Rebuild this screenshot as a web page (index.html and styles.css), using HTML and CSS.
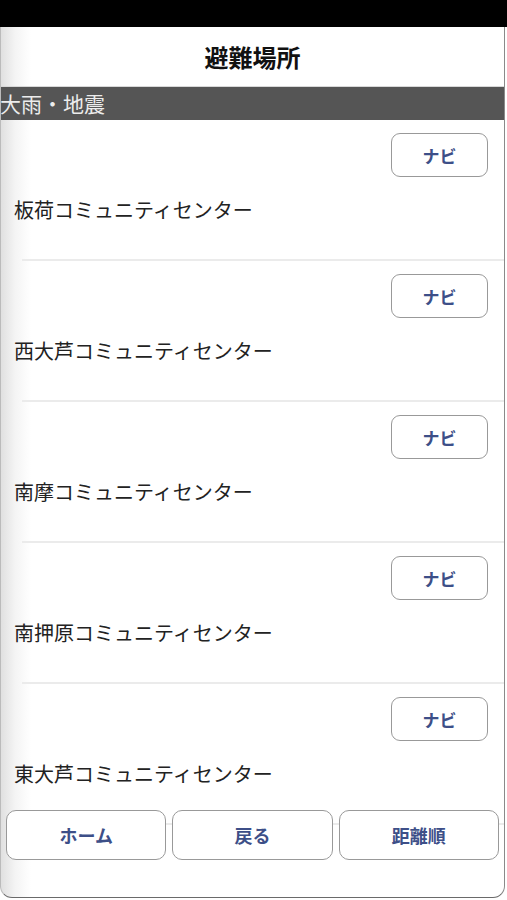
FILE: index.html
```html
<!DOCTYPE html>
<html lang="ja">
<head>
  <meta charset="UTF-8">
  <meta name="viewport" content="width=device-width, initial-scale=1.0">
  <title>避難場所</title>
  <link rel="stylesheet" href="styles.css">
</head>
<body>
  <!-- ステータスバー -->
  <div class="status-bar"></div>

  <div class="card">
    <!-- タイトル -->
    <header class="title-bar">
      <h1>避難場所</h1>
    </header>

    <!-- 種別 -->
    <div class="category">大雨・地震</div>

    <!-- 避難場所の一覧 -->
    <ul class="spots">
      <li class="spot">
        <button class="nav-button">ナビ</button>
        <div class="spot-name">板荷コミュニティセンター</div>
      </li>
      <li class="spot">
        <button class="nav-button">ナビ</button>
        <div class="spot-name">西大芦コミュニティセンター</div>
      </li>
      <li class="spot">
        <button class="nav-button">ナビ</button>
        <div class="spot-name">南摩コミュニティセンター</div>
      </li>
      <li class="spot">
        <button class="nav-button">ナビ</button>
        <div class="spot-name">南押原コミュニティセンター</div>
      </li>
      <li class="spot">
        <button class="nav-button">ナビ</button>
        <div class="spot-name">東大芦コミュニティセンター</div>
      </li>
    </ul>

    <!-- 下のボタン -->
    <footer class="toolbar">
      <button class="tool-button">ホーム</button>
      <button class="tool-button">戻る</button>
      <button class="tool-button">距離順</button>
    </footer>
  </div>
</body>
</html>
```

FILE: styles.css
```css
body {
  margin: 0;
  width: 507px;
  height: 900px;
  background-color: #fff;
  font-family: "Noto Sans CJK JP", "Noto Sans", sans-serif;
  overflow: hidden;
}
/* 一番上の黒いバー */
.status-bar {
  height: 27px;
  background-color: #000;
}
/* 白いカード全体 */
.card {
  position: relative;
  width: 505px;
  height: 871px;
  overflow: hidden;
  border-right: 1px solid #8a8a8a;
  border-bottom: 1px solid #6a6a6a;
  border-left: 1px solid #bbb;
  border-radius: 0 0 12px 12px;
  box-sizing: border-box;
  background: linear-gradient(to right, #e0e0e0 0, #f4f4f4 14px, #fff 30px);
}
.title-bar {
  height: 59px;
  display: flex;
  align-items: center;
  justify-content: center;
  border-bottom: 1px solid #d8d8d8;
}
h1 {
  margin: 0;
  font-size: 24px;
  font-weight: bold;
  color: #111;
}
/* グレーの帯 */
.category {
  height: 33px;
  line-height: 33px;
  margin-left: -1px;
  background-color: #555;
  color: #ececec;
  font-size: 21px;
}
.spots {
  list-style: none;
  margin: 0;
  padding: 0;
}
.spot {
  height: 141px;
  margin-left: 21px;
  padding: 13px 16px 0 0;
  box-sizing: border-box;
  border-bottom: 2px solid #ebebeb;
  display: flex;
  flex-direction: column;
  align-items: flex-end;
}
.nav-button {
  width: 97px;
  height: 44px;
  border: 1.5px solid #999;
  border-radius: 9px;
  background-color: #fff;
  color: #3d4f88;
  font-family: inherit;
  font-size: 17px;
  font-weight: bold;
}
.spot-name {
  align-self: flex-start;
  margin: 18px 0 0 -8px;
  font-size: 20px;
  line-height: 30px;
  color: #222;
}
/* 下のツールバー（リストの上に重なる） */
.toolbar {
  position: absolute;
  left: 5px;
  right: 5px;
  top: 783px;
  display: flex;
  gap: 6px;
}
.tool-button {
  flex: 1;
  height: 50px;
  border: 1.5px solid #999;
  border-radius: 10px;
  background-color: #fff;
  color: #3d4f88;
  font-family: inherit;
  font-size: 18px;
  font-weight: bold;
}
```
